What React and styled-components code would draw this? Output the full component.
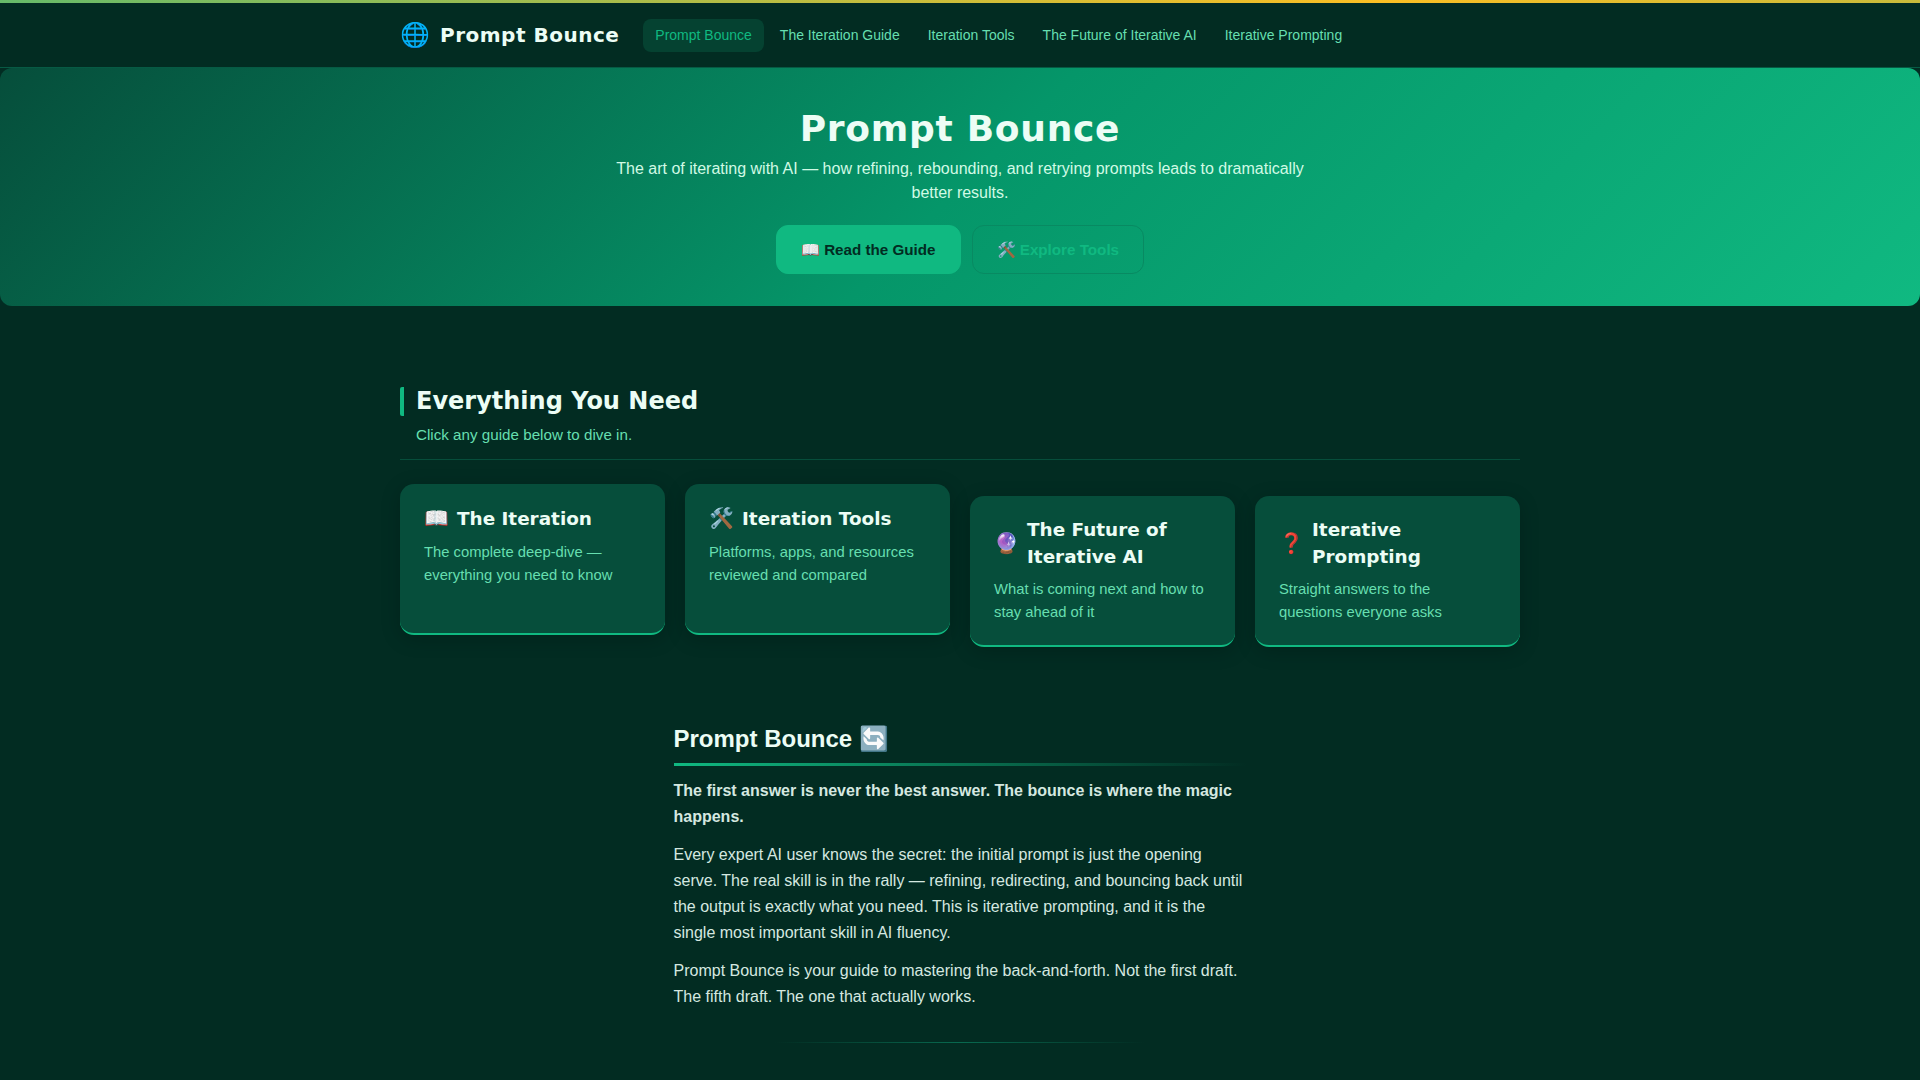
import styled, { createGlobalStyle } from 'styled-components';

const navLinks = ['Prompt Bounce', 'The Iteration Guide', 'Iteration Tools', 'The Future of Iterative AI', 'Iterative Prompting'];

const guides = [
  { icon: '📖', title: 'The Iteration', text: 'The complete deep-dive — everything you need to know', offset: 0 },
  { icon: '🛠️', title: 'Iteration Tools', text: 'Platforms, apps, and resources reviewed and compared', offset: 0 },
  { icon: '🔮', title: 'The Future of Iterative AI', text: 'What is coming next and how to stay ahead of it', offset: 12 },
  { icon: '❓', title: 'Iterative Prompting', text: 'Straight answers to the questions everyone asks', offset: 12 },
];

function App() {
  return (
    <>
      <GlobalStyle />
      <TopStripe />
      <Nav>
        <NavInner>
          <Logo><LogoIcon>🌐</LogoIcon>Prompt Bounce</Logo>
          <NavList>
            {navLinks.map((link, i) => (
              <NavLink key={link} $active={i === 0}>{link}</NavLink>
            ))}
          </NavList>
        </NavInner>
      </Nav>
      <Hero>
        <HeroTitle>Prompt Bounce</HeroTitle>
        <HeroText>The art of iterating with AI — how refining, rebounding, and retrying prompts leads to dramatically better results.</HeroText>
        <HeroButtons>
          <HeroButton $primary>📖 Read the Guide</HeroButton>
          <HeroButton>🛠️ Explore Tools</HeroButton>
        </HeroButtons>
      </Hero>
      <Main>
        <SectionHead>
          <SectionTitle>Everything You Need</SectionTitle>
          <SectionSub>Click any guide below to dive in.</SectionSub>
        </SectionHead>
        <CardGrid>
          {guides.map((g) => (
            <Card key={g.title} $offset={g.offset}>
              <CardTitle><CardIcon>{g.icon}</CardIcon><span>{g.title}</span></CardTitle>
              <CardText>{g.text}</CardText>
            </Card>
          ))}
        </CardGrid>
        <Article>
          <ArticleTitle>Prompt Bounce 🔄</ArticleTitle>
          <Lead>The first answer is never the best answer. The bounce is where the magic happens.</Lead>
          <Para>Every expert AI user knows the secret: the initial prompt is just the opening serve. The real skill is in the rally — refining, redirecting, and bouncing back until the output is exactly what you need. This is iterative prompting, and it is the single most important skill in AI fluency.</Para>
          <Para>Prompt Bounce is your guide to mastering the back-and-forth. Not the first draft. The fifth draft. The one that actually works.</Para>
          <ArticleRule />
        </Article>
      </Main>
    </>
  );
}
export default App;

const GlobalStyle = createGlobalStyle`
  * { box-sizing: border-box; }
  body {
    margin: 0;
    background: #022c22;
    font-family: "Liberation Sans", Arial, sans-serif;
    color: #ecfdf5;
    overflow: hidden;
  }
`;

const TopStripe = styled.div`
  height: 3px;
  background: linear-gradient(90deg, #66bb6a, #fbbf24 72%, #c8bb3c);
`;

const Nav = styled.nav`
  background: #022c22;
  border-bottom: 1px solid #075a44;
  height: 65px;
`;

const NavInner = styled.div`
  width: 1120px;
  height: 64px;
  margin: 0 auto;
  display: flex;
  align-items: center;
  gap: 24px;
`;

const Logo = styled.div`
  display: flex;
  align-items: center;
  gap: 10px;
  font-family: "DejaVu Sans", sans-serif;
  font-weight: 700;
  font-size: 20px;
  color: #ecfdf5;
  letter-spacing: 0.5px;
`;

const LogoIcon = styled.span`
  font-size: 24px;
  letter-spacing: 0;
`;

const NavList = styled.div`
  display: flex;
  gap: 4px;
`;

const NavLink = styled.a`
  padding: 8px 12px;
  border-radius: 8px;
  font-size: 14px;
  line-height: 17px;
  color: ${(p) => (p.$active ? '#10b981' : '#66dfb0')};
  background: ${(p) => (p.$active ? '#054231' : 'transparent')};
`;

const Hero = styled.header`
  height: 238px;
  border-radius: 12px;
  background: linear-gradient(135deg, #064e3b, #059669 50%, #10b981);
  display: flex;
  flex-direction: column;
  align-items: center;
  padding-top: 39px;
`;

const HeroTitle = styled.h1`
  margin: 0;
  font-family: "DejaVu Sans", sans-serif;
  font-size: 36px;
  line-height: 44px;
  font-weight: 700;
  letter-spacing: 0.02em;
  color: #ecfdf5;
`;

const HeroText = styled.p`
  margin: 6px 0 0;
  width: 700px;
  text-align: center;
  font-size: 16px;
  line-height: 24px;
  color: #d1fae5;
`;

const HeroButtons = styled.div`
  display: flex;
  gap: 11px;
  margin-top: 20px;
`;

const HeroButton = styled.a`
  padding: 14px 24px;
  border-radius: 12px;
  font-size: 15.2px;
  line-height: 19px;
  font-weight: 700;
  color: ${(p) => (p.$primary ? '#022c22' : '#10b981')};
  background: ${(p) => (p.$primary ? '#10b981' : 'transparent')};
  border: 1px solid ${(p) => (p.$primary ? '#10b981' : '#088a62')};
`;

const Main = styled.main`
  width: 1120px;
  margin: 0 auto;
  padding-top: 81px;
`;

const SectionHead = styled.div`
  border-bottom: 1px solid #064e3b;
  padding-bottom: 14px;
`;

const SectionTitle = styled.h2`
  margin: 0;
  padding-left: 12px;
  border-left: 4px solid #10b981;
  border-radius: 2px;
  font-family: "DejaVu Sans", sans-serif;
  font-size: 24px;
  line-height: 29px;
  font-weight: 700;
  color: #ecfdf5;
`;

const SectionSub = styled.p`
  margin: 9px 0 0 16px;
  font-size: 15.2px;
  line-height: 20px;
  color: #66dfb0;
`;

const CardGrid = styled.div`
  display: grid;
  grid-template-columns: repeat(4, 1fr);
  gap: 20px;
  margin-top: 24px;
`;

const Card = styled.a`
  display: block;
  height: 151px;
  padding: 20px 24px;
  border-radius: 14px;
  background: #064e3b;
  border-bottom: 2px solid #10b981;
  box-shadow: 0 4px 20px rgba(0, 0, 0, 0.2);
  transform: translateY(${(p) => p.$offset}px);
`;

const CardTitle = styled.h3`
  margin: 0;
  min-height: 29px;
  display: flex;
  align-items: center;
  gap: 8px;
  font-family: "DejaVu Sans", sans-serif;
  font-size: 18.4px;
  line-height: 27px;
  font-weight: 700;
  color: #ecfdf5;
`;

const CardIcon = styled.span`
  font-size: 20px;
`;

const CardText = styled.p`
  margin: 8px 0 0;
  font-size: 14.8px;
  line-height: 22.94px;
  color: #66dfb0;
`;

const Article = styled.article`
  width: 573px;
  margin: 88px auto 0;
`;

const ArticleTitle = styled.h2`
  margin: 0;
  padding-bottom: 11px;
  font-size: 24px;
  line-height: 32px;
  font-weight: 700;
  color: #ecfdf5;
  position: relative;
  &::after {
    content: '';
    position: absolute;
    left: 0;
    right: 0;
    bottom: 0;
    height: 3px;
    background: linear-gradient(90deg, #10b981, transparent);
  }
`;

const Lead = styled.p`
  margin: 12px 0 0;
  font-size: 16px;
  line-height: 26px;
  font-weight: 700;
  color: #d5e8e0;
`;

const Para = styled.p`
  margin: 12px 0 0;
  font-size: 16px;
  line-height: 26px;
  color: #d5e8e0;
`;

const ArticleRule = styled.hr`
  margin: 32px auto 0;
  width: 370px;
  height: 1px;
  border: 0;
  background: linear-gradient(90deg, transparent, #08694f, transparent);
`;
